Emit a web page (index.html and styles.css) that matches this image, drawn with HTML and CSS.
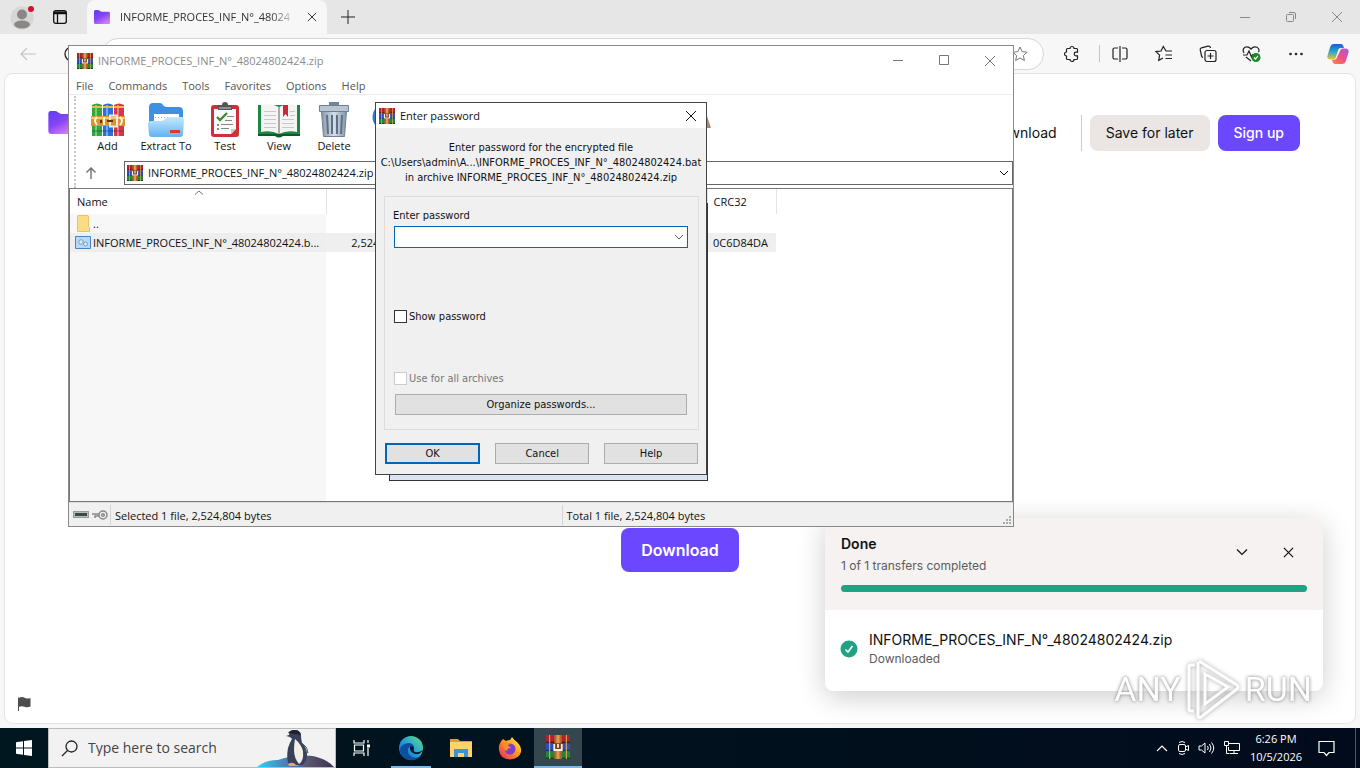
FILE: index.html
```html
<!DOCTYPE html>
<html lang="en">
<head>
<meta charset="utf-8">
<title>INFORME_PROCES_INF_N°_48024802424.zip</title>
<link rel="stylesheet" href="styles.css">
</head>
<body>
<svg class="defs" width="0" height="0" aria-hidden="true">
  <defs>
    <linearGradient id="gFolder" x1="0" y1="0" x2=".6" y2="1"><stop offset="0" stop-color="#5b3df5"/><stop offset=".55" stop-color="#8546f5"/><stop offset="1" stop-color="#d27bf0"/></linearGradient>
    <linearGradient id="gExtract" x1="0" y1="0" x2="0" y2="1"><stop offset="0" stop-color="#c4eaff"/><stop offset="1" stop-color="#62b2f2"/></linearGradient>
    <linearGradient id="gEdge" x1="0" y1="1" x2="1" y2="0"><stop offset="0" stop-color="#0c59a4"/><stop offset=".45" stop-color="#1a9be0"/><stop offset="1" stop-color="#66e07a"/></linearGradient>
    <linearGradient id="gFox" x1="1" y1="0" x2="0" y2="1"><stop offset="0" stop-color="#fff44f"/><stop offset=".45" stop-color="#ff9a1f"/><stop offset="1" stop-color="#ee1f5e"/></linearGradient>
    <linearGradient id="gMetal" x1="0" x2="1"><stop offset="0" stop-color="#8698aa"/><stop offset=".5" stop-color="#d3dee8"/><stop offset="1" stop-color="#8294a6"/></linearGradient>
    <linearGradient id="gIce" x1="0" x2="1"><stop offset="0" stop-color="#2ed3f7"/><stop offset=".35" stop-color="#4a84b8"/><stop offset=".65" stop-color="#5d566f"/><stop offset="1" stop-color="#3b3350"/></linearGradient>
    <linearGradient id="gCopA" x1="0" y1="0" x2="0" y2="1"><stop offset="0" stop-color="#1b5bd0"/><stop offset=".5" stop-color="#2aa7c9"/><stop offset="1" stop-color="#f0c52c"/></linearGradient>
    <linearGradient id="gCopB" x1="1" y1="0" x2="0" y2="1"><stop offset="0" stop-color="#a15be8"/><stop offset=".5" stop-color="#ef4f8b"/><stop offset="1" stop-color="#f98a3c"/></linearGradient>
    <symbol id="rar" viewBox="0 0 16 16">
      <path fill="#b5202d" d="M0 0h16v5.400H0z"/><path fill="#2f4fb8" d="M0 5.400h16v5.300H0z"/><path fill="#23843a" d="M0 10.700h16V16H0z"/>
      <path fill="#5a1018" d="M0 4.400h16v1H0z"/><path fill="#1a2b6d" d="M0 9.900h16v.8H0z"/><path fill="#114a1d" d="M0 15h16v1H0z"/>
      <path fill="#c9a25a" d="M2 0h.8v16H2zM13.200 0h.8v16h-.8z"/>
      <path fill="#b5662a" d="M5.500 0h5v16h-5z"/><path fill="#dd9a4c" d="M7 0h2v16H7z"/>
      <path fill="#7a3b12" d="M5 5.500h6v5H5z"/>
      <path fill="none" stroke="#f7efe0" stroke-width="1.200" d="M5.500 6v4h5V6M8 6v2.500"/>
    </symbol>
    <symbol id="folder" viewBox="0 0 16 14"><path fill="url(#gFolder)" d="M1.500 0H4q1 0 1.800.8T8 1.800h6.500A1.500 1.500 0 0 1 16 3.300v9.200a1.500 1.500 0 0 1-1.500 1.500h-13A1.500 1.500 0 0 1 0 12.500v-11A1.500 1.500 0 0 1 1.500 0z"/></symbol>
    <symbol id="x" viewBox="0 0 12 12"><path d="M1 1l10 10M11 1L1 11" fill="none" stroke="currentColor"/></symbol>
    <symbol id="chev" viewBox="0 0 12 12"><path d="M2 4l4 4 4-4" fill="none" stroke="currentColor"/></symbol>
  </defs>
</svg>

<div class="desktop">
  <section class="browser">
    <header class="tabstrip">
      <button class="icon-btn avatar" aria-label="Profile"><svg width="26" height="26" viewBox="0 0 26 26"><circle cx="12" cy="14" r="11.500" fill="#d6d6d6"/><circle cx="12" cy="10.500" r="5" fill="#8a8886"/><ellipse cx="12" cy="20.500" rx="8" ry="4" fill="#8a8886"/><circle cx="21" cy="5" r="3" fill="#d0122c"/></svg></button>
      <button class="icon-btn tabs-menu" aria-label="Tab actions"><svg width="14" height="14" viewBox="0 0 14 14" fill="none" stroke="#111" stroke-width="1.300"><rect x=".7" y=".7" width="12.600" height="12.600" rx="2"/><path d="M1 3.500h12M4.500 3.500V13"/><path stroke-width="2.200" d="M1 2.500h12"/></svg></button>
      <div class="tab">
        <svg width="16" height="14"><use href="#folder"/></svg>
        <span class="tab-title">INFORME_PROCES_INF_N°_48024</span>
        <button class="icon-btn" aria-label="Close tab"><svg width="10" height="10"><use href="#x" width="10" height="10"/></svg></button>
      </div>
      <button class="icon-btn new-tab" aria-label="New tab"><svg width="14" height="14" viewBox="0 0 14 14" stroke="#222"><path d="M7 0v14M0 7h14"/></svg></button>
      <div class="caption">
        <button class="icon-btn" aria-label="Minimize"><svg width="10" height="10" stroke="#888"><path d="M0 5.500h10"/></svg></button>
        <button class="icon-btn" aria-label="Restore"><svg width="10" height="10" viewBox="0 0 10 10" fill="none" stroke="#888"><rect x=".5" y="2.500" width="7" height="7" rx="1"/><path d="M3 .5h5a1.500 1.500 0 0 1 1.500 1.500v5"/></svg></button>
        <button class="icon-btn" aria-label="Close"><svg width="12" height="12" color="#888"><use href="#x"/></svg></button>
      </div>
    </header>
    <div class="toolbar">
      <button class="icon-btn back" aria-label="Back"><svg width="16" height="14" viewBox="0 0 16 14" fill="none" stroke="#c4c4c4" stroke-width="1.200"><path d="M16 7H1M7 1L1 7l6 6"/></svg></button>
      <button class="icon-btn reload" aria-label="Reload"><svg width="16" height="16" viewBox="0 0 16 16" fill="none" stroke="#222" stroke-width="1.300"><circle cx="8" cy="8" r="7"/></svg></button>
      <div class="omnibox"><svg width="16" height="16" viewBox="0 0 16 16" fill="none" stroke="#777"><path d="M8 1l2.100 4.600 5 .6-3.700 3.400 1 4.900L8 12l-4.400 2.500 1-4.900L.9 6.200l5-.6z"/></svg></div>
      <nav class="tools">
        <button class="icon-btn" aria-label="Extensions"><svg width="18" height="18" viewBox="0 0 18 18" fill="none" stroke="#222" stroke-width="1.200"><path d="M4.500 3.500H7a2 2 0 0 1 4 0h2.500q1 0 1 1v2.700H13a1.800 1.800 0 1 0 0 3.600h1.500v2.700q0 1-1 1H11a2 2 0 0 1-4 0H4.500q-1 0-1-1V11a2 2 0 0 1 0-4V4.500q0-1 1-1z"/></svg></button>
        <span class="tool-sep"></span>
        <button class="icon-btn" aria-label="Split screen"><svg width="18" height="18" viewBox="0 0 18 18" fill="none" stroke="#222" stroke-width="1.200"><path d="M7 3H3.500A1.500 1.500 0 0 0 2 4.500v8A1.500 1.500 0 0 0 3.500 14H7M11 3h3.500A1.500 1.500 0 0 1 16 4.500v8a1.500 1.500 0 0 1-1.500 1.500H11M9 1v16"/></svg></button>
        <button class="icon-btn" aria-label="Favorites"><svg width="18" height="18" viewBox="0 0 18 18" fill="none" stroke="#222" stroke-width="1.200"><path d="M17 6h-6L8.300 1.500 6 6l-5 .6 3.600 3.500-.9 5.200L8 13M10.500 10H17M10.500 13.500H17"/></svg></button>
        <button class="icon-btn" aria-label="Collections"><svg width="18" height="18" viewBox="0 0 18 18" fill="none" stroke="#222" stroke-width="1.200"><path d="M4 12.500A2 2 0 0 1 2.600 11L1.200 5A2 2 0 0 1 2.500 2.800L9 1.200A2 2 0 0 1 11.500 3"/><rect x="6" y="5.500" width="11" height="11" rx="2"/><path d="M11.500 8v6M8.500 11h6"/></svg></button>
        <button class="icon-btn" aria-label="Browser essentials"><svg width="20" height="18" viewBox="0 0 20 18" fill="none" stroke="#222" stroke-width="1.200"><path d="M2 8C0 4.500 2 1.800 5 1.800c1.800 0 3 1 4 2.200 1-1.200 2.200-2.200 4-2.200 3 0 5 2.700 3.500 5.500M1 10h4l2-4 2.500 6L11 9M4 12l5 4"/><circle cx="14" cy="12.500" r="4.500" fill="#1a8a24" stroke="none"/><path stroke="#fff" d="M12 12.500l1.500 1.500 2.500-3"/></svg></button>
        <button class="icon-btn" aria-label="Settings and more"><svg width="18" height="18" viewBox="0 0 18 18" fill="#222"><circle cx="3.500" cy="9" r="1.300"/><circle cx="9" cy="9" r="1.300"/><circle cx="14.500" cy="9" r="1.300"/></svg></button>
        <button class="icon-btn" aria-label="Copilot"><svg width="22" height="20" viewBox="0 0 22 20"><path fill="url(#gCopA)" d="M7 0h7c1.500 0 2 1 2.500 2.500L17 4h-3c-2 0-2.500 1-3 2.500L9 13c-.5 1.500-1 2.500-3 2.500H3.500C1 15.500-.2 14 .5 11.500L3 3.500C3.800 1 5 0 7 0z"/><path fill="url(#gCopB)" d="M15 20H8c-1.500 0-2-1-2.500-2.500L5 15.800h2c2 0 2.500-1 3-2.500L13 7c.5-1.500 1-2.500 3-2.500h2.500C21 4.500 22.200 6 21.500 8.500L19 16.500C18.200 19 17 20 15 20z"/></svg></button>
      </nav>
    </div>
    <main class="page">
      <header class="site-head">
        <svg class="site-logo" width="27" height="23"><use href="#folder"/></svg>
        <a class="head-link" href="#">Download</a>
        <span class="head-sep"></span>
        <button class="pill soft">Save for later</button>
        <button class="pill primary">Sign up</button>
      </header>
      <div class="page-action"><button class="download">Download</button></div>
      <button class="icon-btn flag" aria-label="Report"><svg width="13" height="14" viewBox="0 0 13 14" fill="#4d4d4d"><path d="M0 .5h1v13.500H0zM1 1c2-1.200 4-1.200 6 0 2 .8 4 .8 5.500 0v8.500c-2 1-4 1-6 .2C4.500 9 3 9 1 9.800z"/></svg></button>

      <aside class="toast">
        <div class="toast-head">
          <div class="toast-title">
            <div><strong>Done</strong><p>1 of 1 transfers completed</p></div>
            <button class="icon-btn" aria-label="Collapse"><svg width="12" height="12" viewBox="0 0 12 12"><path d="M1 3.500l5 5 5-5" fill="none" stroke="#111" stroke-width="1.200"/></svg></button>
            <button class="icon-btn" aria-label="Dismiss"><svg width="11" height="11" viewBox="0 0 12 12"><path d="M1 1l10 10M11 1L1 11" fill="none" stroke="#111" stroke-width="1.300"/></svg></button>
          </div>
          <div class="bar"></div>
        </div>
        <div class="toast-row">
          <svg width="18" height="18" viewBox="0 0 18 18"><circle cx="9" cy="9" r="8.500" fill="#1fa382"/><path d="M5.500 9.500l2.500 2.500 4.500-6" fill="none" stroke="#fff" stroke-width="1.500"/></svg>
          <div><b>INFORME_PROCES_INF_N°_48024802424.zip</b><p>Downloaded</p></div>
        </div>
      </aside>
    </main>
  </section>

  <section class="rar-window">
    <header class="win-title">
      <svg width="16" height="16"><use href="#rar"/></svg>
      <span>INFORME_PROCES_INF_N°_48024802424.zip</span>
      <div class="win-caption">
        <button class="icon-btn" aria-label="Minimize"><svg width="12" height="12" stroke="#777"><path d="M1 5.500h10"/></svg></button>
        <button class="icon-btn" aria-label="Maximize"><svg width="12" height="12" fill="none" stroke="#777"><path d="M1.500.5h9v9h-9z"/></svg></button>
        <button class="icon-btn" aria-label="Close"><svg width="12" height="12" color="#777"><use href="#x"/></svg></button>
      </div>
    </header>
    <nav class="menu"><a href="#">File</a><a href="#">Commands</a><a href="#">Tools</a><a href="#">Favorites</a><a href="#">Options</a><a href="#">Help</a></nav>
    <div class="bars">
      <div class="actions">
        <button class="w-add"><svg width="36" height="36" viewBox="0 0 36 36"><path fill="#35a53d" d="M2 3q5-3 10 0v31H2z"/><path fill="#2a6fdc" d="M13 3q5-3 10 0v31H13z"/><path fill="#dc3345" d="M24 3q5-3 10 0v31H24z"/><path fill="#6ed074" d="M5 3h2v31H5z"/><path fill="#6fabf6" d="M16 3h2v31h-2z"/><path fill="#f67b8a" d="M27 3h2v31h-2z"/><path fill="#e9b84a" d="M2 4h10v2H2zM13 4h10v2H13zM24 4h10v2H24z"/><path fill="#1c3d66" opacity=".3" d="M2 28h32v2H2z"/><path fill="#d9932f" d="M1 14h34v10H1z"/><path fill="#f6c863" d="M1 15h34v2H1z"/><g fill="none" stroke="#fff4d8" stroke-width="2"><path d="M7 15q-4 4 0 8M14 15v8M30 15q4 4 0 8"/><rect x="20" y="13.500" width="7" height="11" stroke="#f2e8dc"/></g><path fill="#5e340f" d="M10 18h2v3h-2zM17 18h6v2h-6z"/></svg><span>Add</span></button>
        <button class="w-extract"><svg width="38" height="36" viewBox="0 0 38 36"><path fill="#3f8fe2" d="M2 5q0-4 4-4h7q2 0 3 2t4 2h12q4 0 4 4v14H2z"/><path fill="#fff" d="M7 12h25v9H7z"/><path stroke="#9ab" stroke-dasharray="1 2" d="M8 15.500h23"/><path fill="url(#gExtract)" d="M1 22q0-3 3-3h10q2 0 4-2t4-2h12q3 0 3 3l-1 14q0 3-3 3H5q-3 0-3-3z"/><path fill="#d93a34" d="M23 28h10v3H23z"/></svg><span>Extract To</span></button>
        <button class="w-test"><svg width="30" height="36" viewBox="0 0 30 36"><rect x="1" y="3" width="28" height="32" rx="3" fill="#cf2f36"/><path fill="#fafafa" d="M4 7h22v20l-5 5H4z"/><path fill="#c8c8c8" d="M26 27l-5 5v-5z"/><path fill="#555" d="M8 3h4a3 3 0 0 1 6 0h4v5H8z"/><path fill="#ccc" d="M9 5.500h12v1H9z"/><path fill="none" stroke="#3b8c35" stroke-width="2.400" d="M7 15l3 3 7-7"/><g stroke="#888"><path d="M17 14.500h7M15 18.500h7M11 22.500h12M11 26.500h8"/></g><path fill="#888" d="M7 22h2v2H7zM7 26h2v2H7z"/></svg><span>Test</span></button>
        <button class="w-view"><svg width="44" height="36" viewBox="0 0 44 36"><path fill="#1c8642" d="M1 3h42v31H1z"/><path fill="#0e5a2a" d="M1 32h42v2H26q-4 3-8 0H1z"/><path fill="#f4f4f4" d="M4 3q11-2 18 2v27q-8-4-18-2zM40 3q-11-2-18 2v27q8-4 18-2z"/><path stroke="#aaa" stroke-width="2" d="M22 5v27"/><g stroke="#c8c8c8"><path d="M7 9.500h12M7 13.500h12M7 17.500h12M7 21.500h12M7 25.500h12M25 17.500h12M25 21.500h12M25 25.500h12M33 9.500h5M33 13.500h5"/></g><path fill="#cc2936" d="M26 3h5v12l-2.500-3L26 15z"/></svg><span>View</span></button>
        <button class="w-delete"><svg width="34" height="36" viewBox="0 0 34 36"><path fill="#71859a" d="M12 0h10v3H12z"/><path fill="#b9c6d2" stroke="#6e8194" d="M2.500 3.500h29v6h-29z"/><path fill="url(#gMetal)" stroke="#6e8194" d="M4.500 9.500h25l-2 25h-21z"/><g stroke="#5c7186" stroke-width="2"><path d="M10 13l1 19M15 13v19M20 13v19M25 13l-1 19"/></g></svg><span>Delete</span></button>
        <button class="w-find" aria-label="Find"><svg width="34" height="36" viewBox="0 0 34 36"><circle cx="15" cy="15" r="12" fill="#cfe6fb" stroke="#3478cf" stroke-width="3"/><path stroke="#3478cf" stroke-width="5" d="M23 24l8 9"/></svg></button>
      </div>
      <div class="address-row">
        <button class="icon-btn up" aria-label="Up one level"><svg width="12" height="12" viewBox="0 0 12 12" fill="none" stroke="#777" stroke-width="1.500"><path d="M6 12V1M1.500 5.500L6 1l4.500 4.500"/></svg></button>
        <div class="address"><svg width="16" height="16"><use href="#rar"/></svg><input aria-label="Address" value="INFORME_PROCES_INF_N°_48024802424.zip"><svg width="12" height="12"><use href="#chev"/></svg></div>
      </div>
    </div>
    <div class="list">
      <table>
        <colgroup><col class="c-name"><col class="c-size"><col class="c-rest"><col class="c-crc"></colgroup>
        <thead><tr><th>Name<svg class="sort" width="10" height="5" fill="none" stroke="#777"><path d="M1 4.500L5 1l4 3.500"/></svg></th><th></th><th></th><th>CRC32</th></tr></thead>
        <tbody>
          <tr><td><span class="file"><svg width="16" height="17" viewBox="0 0 16 17"><path fill="#f9dc85" stroke="#e6c463" d="M2.500 1.500q0-1 1-1h9q1 0 1 1v10l1 1v4h-12z"/></svg>..</span></td><td></td><td></td><td></td></tr>
          <tr class="selected"><td><span class="file"><svg width="16" height="13" viewBox="0 0 16 13"><path fill="#b9d8f3" stroke="#4387c4" d="M.5.5h15v12H.5z"/><g fill="#dcecf9" stroke="#6fa0cc"><circle cx="6" cy="6" r="2.300"/><circle cx="10.500" cy="8" r="2"/></g></svg>INFORME_PROCES_INF_N°_48024802424.b...</span></td><td>2,524,804</td><td></td><td>0C6D84DA</td></tr>
        </tbody>
      </table>
      <div class="shade"></div>
    </div>
    <footer class="status">
      <div class="status-icons"><svg width="16" height="8" viewBox="0 0 16 8"><rect x=".5" y=".5" width="15" height="6" fill="#bbb" stroke="#999"/><path fill="#384a48" d="M2 2h12v3H2z"/></svg><svg width="16" height="10" viewBox="0 0 16 10" fill="none" stroke="#888" stroke-width="1.500"><circle cx="11" cy="5" r="4"/><circle cx="11" cy="5" r="1.300"/><path d="M7 4H0M7 6H3v2"/></svg></div>
      <span>Selected 1 file, 2,524,804 bytes</span>
      <span>Total 1 file, 2,524,804 bytes</span>
      <svg class="grip" width="10" height="10" fill="#aaa"><path d="M7 1h2v2H7zM4 4h2v2H4zM7 4h2v2H7zM1 7h2v2H1zM4 7h2v2H4zM7 7h2v2H7z"/></svg>
    </footer>
    <svg class="peek" width="4" height="12"><path fill="#b08468" d="M0 0l4 12H0z"/></svg>
  </section>

  <div class="back-window"></div>

  <form class="dialog" aria-labelledby="dlg-title">
    <header class="dialog-title">
      <svg width="16" height="16"><use href="#rar"/></svg>
      <span id="dlg-title">Enter password</span>
      <button type="button" class="icon-btn" aria-label="Close"><svg width="12" height="12"><use href="#x"/></svg></button>
    </header>
    <p class="prompt">Enter password for the encrypted file<br>C:\Users\admin\A...\INFORME_PROCES_INF_N°_48024802424.bat<br>in archive INFORME_PROCES_INF_N°_48024802424.zip</p>
    <div class="group">
      <label for="pw">Enter password</label>
      <div class="combo"><input id="pw" type="password"><svg width="12" height="12" color="#76543c"><use href="#chev"/></svg></div>
      <label class="check show"><input type="checkbox">Show password</label>
      <label class="check all"><input type="checkbox" disabled>Use for all archives</label>
      <button type="button" class="btn">Organize passwords...</button>
    </div>
    <div class="buttons">
      <button type="button" class="btn default">OK</button>
      <button type="button" class="btn">Cancel</button>
      <button type="button" class="btn">Help</button>
    </div>
  </form>

  <div class="watermark"><span>ANY</span><svg width="56" height="64" viewBox="0 0 56 64" fill="none" stroke="#fff" stroke-width="3"><path d="M10 8H6q-2 0-2 2v42q0 2 2 2h3"/><path d="M14 4l38 24q2 2 0 4L16 60q-3 2-3-2V5"/><path d="M20 17v30l23-17z"/></svg><span>RUN</span></div>

  <footer class="taskbar">
    <button class="task start" aria-label="Start"><svg width="16" height="16" viewBox="0 0 16 16" fill="#fff"><path d="M0 2.200L7 1.200V7.500H0zM8 1l8-1v7.500H8zM0 8.500h7v6.300l-7-1zM8 8.500h8V16l-8-1.100z"/></svg></button>
    <div class="search"><svg width="17" height="17" viewBox="0 0 17 17" fill="none" stroke="#222" stroke-width="1.300"><circle cx="10.500" cy="6.500" r="5.500"/><path d="M6.500 10.500L1 16"/></svg>
      <input aria-label="Search" placeholder="Type here to search">
      <svg width="78" height="38" viewBox="0 0 78 38"><path fill="url(#gIce)" d="M0 38Q8 31 21 31 38 25 56 27q14 3 21 11z"/><path fill="#39405a" d="M32 6q0-5 6-5 5 0 6 5 0 4 1 8 5 5 5 11 0 8-5 11H32q-3-6-1-17 2-6 4-9-1-2-6-3z"/><path fill="#f1eee6" d="M38 10q6 5 8 12 1 10-4 13-5-6-5-14 0-6 1-11z"/><path fill="#20222e" d="M31 4q2-3 6-3 6 0 7 5-4-1-8-1z"/><path fill="none" stroke="#59606e" d="M45 14q6 4 6 10l-4-3"/><path fill="#d7ac76" d="M31 35q5-3 8 1l4 1H32z"/></svg></div>
    <button class="task view" aria-label="Task view"><svg width="17" height="16" viewBox="0 0 17 16" fill="none" stroke="#fff" stroke-width="1.200"><path d="M1 0v3h10V0M1 16v-3h10v3M1.500 5h9v6h-9zM15 0v3M15 8v8"/><path fill="#fff" stroke="none" d="M14 4.500h3v3h-3z"/></svg></button>
    <button class="task running" aria-label="Edge"><svg width="26" height="26" viewBox="0 0 26 26"><circle cx="13" cy="13" r="12" fill="url(#gEdge)"/><path fill="#0e4e9c" d="M2 16q0-7 8-8 6 0 6 5-4-3-6 1-1 5 4 8 5 2 9-1-5 5-11 4Q3 23 2 16z"/><path fill="#03192a" d="M12 12q3-2 4 1-1 3 1 4 4 1 8-2-3 5-8 4-6-2-5-7z"/></svg></button>
    <button class="task" aria-label="File Explorer"><svg width="24" height="20" viewBox="0 0 24 20"><path fill="#e39c2c" d="M1 1h8l2 2h12v4H1z"/><path fill="#fbd568" d="M1 4h22v15H1z"/><path fill="#3b93d8" d="M5 11h14v8h-4v-4H9v4H5z"/></svg></button>
    <button class="task" aria-label="Firefox"><svg width="24" height="24" viewBox="0 0 24 24"><path fill="url(#gFox)" d="M5 3l3 2q2-1 4-1l2-3q2 3 5 5 5 5 4 10-2 7-11 7.500Q2 23 1 14 0 8 5 3z"/><circle cx="12" cy="13" r="5.500" fill="#7a3fd0"/><path fill="#ff8b22" d="M5 9q4-3 8-1-3 0-3 2 3 1 3 2-4 0-4 3-4-1-4-6z"/></svg></button>
    <button class="task active" aria-label="WinRAR"><svg width="24" height="24"><use href="#rar"/></svg></button>
    <div class="tray">
      <svg width="12" height="8" viewBox="0 0 12 8" fill="none" stroke="#fff" stroke-width="1.200"><path d="M1 7l5-5 5 5"/></svg>
      <svg width="12" height="16" viewBox="0 0 12 16" fill="none" stroke="#fff"><rect x="1.500" y="4.500" width="7" height="7" rx="1.500"/><path d="M8.500 7l3-1.500v5l-3-1.500M2 2.500q3-2 6 0M2 13.500q3 2 6 0"/></svg>
      <svg width="17" height="14" viewBox="0 0 17 14" fill="none" stroke="#fff"><path d="M1 5h2.500L7 2v10L3.500 9H1zM9.500 5q1.500 2 0 4M11.500 3q3 4 0 8M13.500 1.500q4.500 5.500 0 11"/></svg>
      <svg width="16" height="14" viewBox="0 0 16 14" fill="none" stroke="#fff"><path d="M5 2.500h10.500v7H4.500V6M10 9.500v3M6 12.500h8M.5.500h4v4h-4zM2.500 4.500v8h3"/></svg>
      <time><span>6:26 PM</span><span>10/5/2026</span></time>
      <svg class="note" width="17" height="17" viewBox="0 0 17 17" fill="none" stroke="#fff" stroke-width="1.200"><path d="M1 1.500h15v11h-5L8.500 15.500 6 12.500H1z"/></svg>
      <span class="peek-desktop"></span>
    </div>
  </footer>
</div>
</body>
</html>
```
FILE: styles.css
```css
* { box-sizing: border-box; }
html, body { margin: 0; height: 100%; }
body { font: 11px/16px "Open Sans", "Noto Sans", sans-serif; color: #111; overflow: hidden; }
button, input { font: inherit; color: inherit; margin: 0; }
p { margin: 0; }
a { color: inherit; text-decoration: none; }
svg { display: block; flex: none; }
.defs { position: absolute; }
.icon-btn { display: flex; align-items: center; justify-content: center; border: 0; padding: 0; background: none; }

.desktop { position: relative; height: 100vh; display: flex; flex-direction: column; }

/* Browser */
.browser { flex: 1; min-height: 0; display: flex; flex-direction: column; background: #f7f7f7; }
.tabstrip { display: flex; align-items: center; height: 34px; background: #e6e6e6; }
.avatar { margin-left: 10px; }
.tabs-menu { margin-left: 17px; }
.tab { align-self: stretch; display: flex; align-items: center; gap: 10px; width: 240px; margin-left: 20px; padding: 0 10px 0 7px; background: #f7f7f7; border-radius: 8px 8px 0 0; }
.tab-title { flex: 1; overflow: hidden; white-space: nowrap; color: #333; -webkit-mask-image: linear-gradient(90deg, #000 85%, transparent); mask-image: linear-gradient(90deg, #000 85%, transparent); }
.new-tab { margin-left: 14px; }
.caption { margin-left: auto; display: flex; }
.caption .icon-btn { width: 46px; height: 34px; }
.toolbar { display: flex; align-items: center; height: 39px; padding: 0 11px 0 20px; }
.reload { margin-left: 28px; }
.omnibox { flex: 1; display: flex; align-items: center; justify-content: flex-end; height: 32px; margin-left: 22px; padding-right: 15px; background: #fff; border: 1px solid #d6d6d6; border-radius: 16px; }
.tools { display: flex; align-items: center; gap: 26px; margin-left: 19px; }
.tools .icon-btn { width: 18px; height: 22px; }
.tools .icon-btn:last-child { width: 22px; margin-left: -4px; }
.tool-sep { width: 1px; height: 17px; background: #c4c4c4; margin: 0 -15px 0 -8px; }
.page { position: relative; flex: 1; display: flex; flex-direction: column; margin: 0 4px 4px; background: #fff; border: 1px solid #e4e4e4; border-radius: 9px; font-family: Inter, sans-serif; }
.site-head { display: flex; align-items: center; gap: 8px; padding: 41px 55px 0 43px; font-size: 14px; }
.site-logo { align-self: flex-start; margin-top: -4px; }
.head-link { margin-left: auto; }
.head-sep { width: 1px; height: 36px; margin-left: 16px; background: #ccc; }
.pill { height: 36px; padding: 0 16px; border: 0; border-radius: 8px; }
.soft { background: #ebe6e4; }
.primary { background: #6b48ff; color: #fff; font-weight: 500; }
.page-action { flex: 1; display: flex; align-items: flex-end; justify-content: center; }
.download { height: 44px; padding: 0 20px; border: 0; border-radius: 8px; background: #6b48ff; color: #fff; font-size: 16px; font-weight: 600; }
.flag { width: 13px; margin: 125px 0 12px 13px; }

.toast { position: absolute; right: 32px; bottom: 32px; width: 498px; border-radius: 8px; background: #fff; box-shadow: 0 6px 28px rgba(0, 0, 0, .2); }
.toast-head { padding: 16px 16px 18px; background: #f5f2f1; border-radius: 8px 8px 0 0; }
.toast-title { display: flex; align-items: flex-start; height: 44px; margin-bottom: 7px; }
.toast-title div { flex: 1; }
.toast-title .icon-btn { width: 38px; height: 36px; margin-left: 8px; }
.toast strong { display: block; font-size: 14px; font-weight: 600; line-height: 20px; }
.toast p { font-size: 12px; line-height: 18px; color: #5c5c5c; }
.toast-title p { line-height: 24px; }
.bar { height: 7px; border-radius: 4px; background: #1fa382; }
.toast-row { display: flex; align-items: center; gap: 11px; padding: 20px 15px 23px; }
.toast-row b { display: block; font-size: 14px; font-weight: 400; line-height: 20px; }

/* Archive window */
.rar-window { position: absolute; top: 45px; left: 68px; right: 346px; bottom: 241px; display: flex; flex-direction: column; background: #fff; border: 1px solid #8a8a8a; }
.win-title { display: flex; align-items: center; gap: 5px; height: 29px; padding-left: 8px; color: #8c8c8c; }
.win-caption { display: flex; margin-left: auto; }
.win-caption .icon-btn { width: 46px; height: 28px; }
.menu { display: flex; gap: 15px; height: 20px; padding-left: 7px; line-height: 21px; color: #555; border-bottom: 1px solid #ececec; }
.bars { margin: 1px 0 0 5px; border-left: 2px dotted #c6c6c6; }
.actions { display: flex; align-items: flex-start; height: 64px; padding: 6px 0 0 9px; }
.actions button { display: flex; flex-direction: column; align-items: center; padding: 0; border: 0; background: none; white-space: nowrap; }
.w-add { width: 45px; }
.w-extract { width: 72px; }
.w-test { width: 46px; }
.w-view { width: 62px; }
.w-delete { width: 48px; }
.w-find { width: 60px; }
.address-row { display: flex; height: 28px; align-items: center; padding-bottom: 3px; }
.up { width: 30px; }
.address { flex: 1; display: flex; align-items: center; height: 24px; margin-left: 18px; padding: 0 2px; border: 1px solid #666; }
.address input { flex: 1; min-width: 0; border: 0; padding: 0 5px; background: none; outline: 0; }
.list { position: relative; flex: 1; min-height: 0; border: 1px solid #777; display: flex; flex-direction: column; }
table { table-layout: fixed; width: 706px; border-collapse: collapse; }
.c-name { width: 256px; }
.c-size { width: 80px; }
.c-rest { width: 301px; }
.c-crc { width: 69px; }
th { position: relative; height: 25px; padding: 0 7px; font-weight: 400; text-align: left; border-right: 1px solid #e3e3e3; }
th:nth-child(4), td:nth-child(4) { padding-left: 6px; }
.sort { position: absolute; left: 124px; top: 1px; }
td { height: 19px; padding: 0 5px; white-space: nowrap; line-height: 17px; }
td:nth-child(1) { background: #f7f7f7; }
td:nth-child(2) { text-align: right; }
.file { display: flex; align-items: center; gap: 2px; }
.selected td { background: #efefef; }
.selected td:first-child { background: #eee; }
.shade { flex: 1; width: 256px; background: #f7f7f7; }
.status { display: flex; align-items: center; height: 24px; background: #f0f0f0; border-top: 1px solid #ddd; }
.status-icons { display: flex; align-items: center; gap: 3px; width: 42px; height: 20px; padding-left: 4px; border-right: 1px solid #d5d5d5; }
.status span { flex: 1; padding: 1px 0 0 4px; line-height: 19px; border-right: 1px solid #d5d5d5; }
.status span + span { border: 0; }
.grip { position: absolute; right: 1px; bottom: 1px; }
.peek { position: absolute; left: 638px; top: 70px; }

.back-window { position: absolute; left: 389px; top: 203px; width: 319px; height: 278px; background: #d9e3f2; border: 1px solid #333; }

/* Password dialog */
.dialog { position: absolute; left: 375px; top: 102px; width: 332px; background: #f0f0f0; border: 1px solid #444; font: 11px/15px "DejaVu Sans Condensed", "Noto Sans", sans-serif; }
.dialog-title { display: flex; align-items: center; gap: 5px; height: 25px; padding-left: 3px; background: #fff; font: 11px/16px "Open Sans", sans-serif; }
.dialog-title .icon-btn { width: 30px; height: 25px; margin-left: auto; }
.prompt { margin: 12px -4px 11px; text-align: center; white-space: nowrap; }
.group { display: flex; flex-direction: column; height: 234px; margin: 0 7px 13px 8px; padding: 11px 11px 14px 8px; border: 1px solid #dcdcdc; }
.combo { display: flex; align-items: center; height: 22px; margin-top: 3px; margin-left: 1px; margin-right: -1px; padding-right: 2px; background: #fff; border: 1px solid #0067b8; }
.combo input { flex: 1; min-width: 0; border: 0; outline: 0; background: none; }
.check { display: flex; align-items: center; gap: 2px; padding-left: 1px; }
.check input { appearance: none; width: 13px; height: 13px; border: 1px solid #333; background: #fff; }
.show { margin-top: 61px; }
.all { margin: auto 0 8px; color: #777; }
.all input { border-color: #ccc; }
.btn { height: 21px; padding: 0; background: #e1e1e1; border: 1px solid #adadad; }
.group .btn { margin-left: 2px; }
.buttons { display: flex; gap: 15px; padding: 0 8px 10px 9px; }
.buttons .btn { width: 100%; }
.buttons .default { border: 2px solid #0067b8; }

.watermark { position: absolute; right: 48px; bottom: 47px; display: flex; align-items: center; gap: 4px; color: #fff; font: 34px/36px Roboto, sans-serif; text-shadow: 0 0 3px #888, 0 0 4px #bbb; pointer-events: none; opacity: .9; }
.watermark svg { filter: drop-shadow(0 0 2px #999); }

/* Taskbar */
.taskbar { display: flex; height: 40px; background: linear-gradient(90deg, #00171f, #020b1c); color: #fff; }
.task { display: flex; align-items: center; justify-content: center; width: 49px; padding: 0; border: 0; background: none; }
.start { width: 48px; }
.view { width: 50px; }
.running { border-bottom: 2px solid #76b9ed; width: 40px; margin: 0 5px; padding-top: 2px; }
.active { background: #34464e; border-bottom: 2px solid #76b9ed; width: 48px; }
.search { display: flex; align-items: center; width: 288px; padding-left: 12px; background: #f2f2f2; border: 1px solid #bbb; color: #333; }
.search input { flex: 1; min-width: 0; border: 0; outline: 0; padding: 0 0 0 10px; background: none; font-size: 14px; }
.search input::placeholder { color: #444; opacity: 1; }
.search svg:last-child { align-self: flex-end; }
.tray { display: flex; align-items: center; gap: 9px; margin-left: auto; }
.tray time { display: flex; flex-direction: column; align-items: center; width: 60px; line-height: 18px; margin-left: -3px; }
.note { margin: 0 11px 0 3px; }
.peek-desktop { width: 5px; height: 40px; border-left: 1px solid #555; }
```
